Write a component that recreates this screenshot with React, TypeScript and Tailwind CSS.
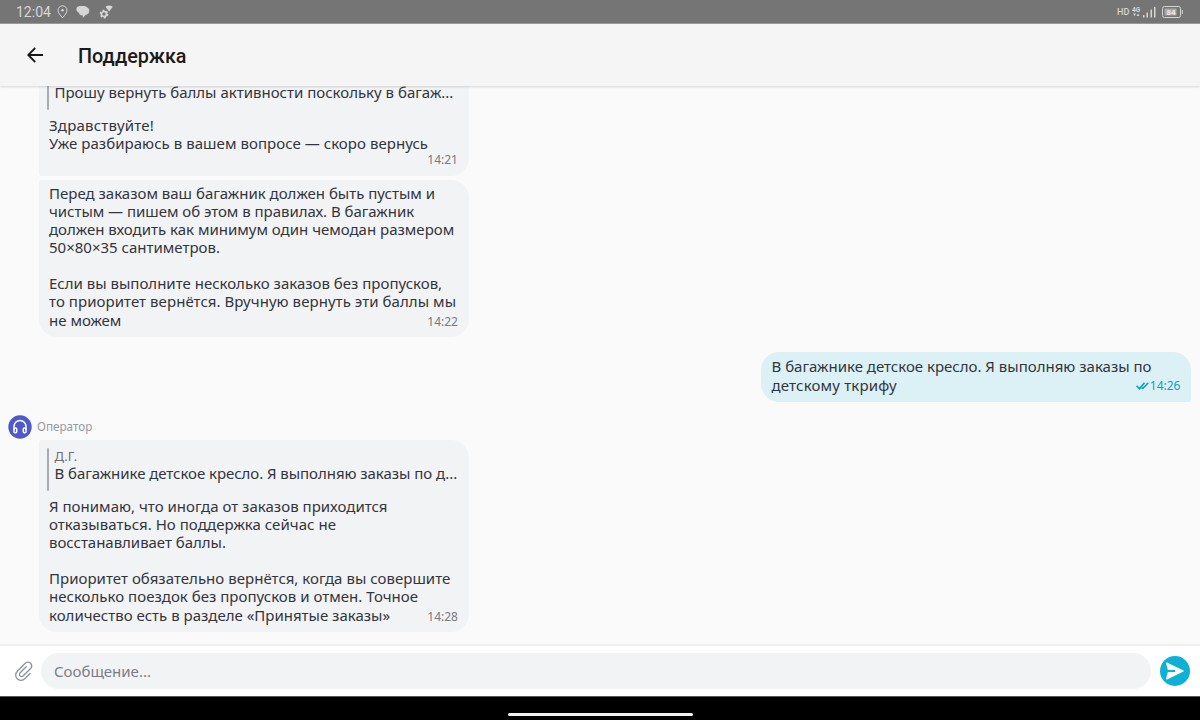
import * as React from "react";
import clsx from "clsx";

type Line = {
  text: string;
  tracking?: string;
};

type Quote = {
  author?: string;
  line: Line;
};

const waitLines: Line[] = [
  { text: "Здравствуйте!", tracking: "tracking-[0.2px]" },
  { text: "Уже разбираюсь в вашем вопросе — скоро вернусь", tracking: "tracking-[0.05px]" }
];

const rulesLines: Line[] = [
  { text: "Перед заказом ваш багажник должен быть пустым и" },
  { text: "чистым — пишем об этом в правилах. В багажник", tracking: "tracking-[-0.03px]" },
  { text: "должен входить как минимум один чемодан размером" },
  { text: "50×80×35 сантиметров." },
  { text: "" },
  { text: "Если вы выполните несколько заказов без пропусков," },
  { text: "то приоритет вернётся. Вручную вернуть эти баллы мы", tracking: "tracking-[0.06px]" },
  { text: "не можем" }
];

const ownLines: Line[] = [
  { text: "В багажнике детское кресло. Я выполняю заказы по" },
  { text: "детскому ткрифу", tracking: "tracking-[0.18px]" }
];

const answerLines: Line[] = [
  { text: "Я понимаю, что иногда от заказов приходится", tracking: "tracking-[0.02px]" },
  { text: "отказываться. Но поддержка сейчас не", tracking: "tracking-[0.04px]" },
  { text: "восстанавливает баллы.", tracking: "tracking-[-0.03px]" },
  { text: "" },
  { text: "Приоритет обязательно вернётся, когда вы совершите", tracking: "tracking-[0.03px]" },
  { text: "несколько поездок без пропусков и отмен. Точное", tracking: "tracking-[0.02px]" },
  { text: "количество есть в разделе «Принятые заказы»" }
];

function StatusBar() {
  return (
    <div className="flex h-6 shrink-0 items-center border-b border-[#9b9b9b] bg-[#757575] pl-4 pr-4 text-[#d6d6d6]">
      <span className="w-[35px] pt-px font-['Roboto',sans-serif] text-[14px] leading-6">12:04</span>
      <svg className="ml-[6px] h-[14px] w-[11px]" viewBox="0 0 11 14" fill="none" stroke="currentColor">
        <path d="M5.500 12.800C3.200 10.200 1 7.700 1 5.300a4.500 4.500 0 0 1 9 0c0 2.400-2.200 4.900-4.500 7.500Z" />
        <circle cx="5.500" cy="5.300" r="1.300" fill="currentColor" stroke="none" />
      </svg>
      <svg className="ml-2 h-[14px] w-[14px]" viewBox="0 0 14 14" fill="currentColor">
        <path d="M4.500 1h3c1.700 0 2.900.5 3.700 1.500 1.300.6 2.100 1.800 2.100 3.300 0 2.200-1.600 4-4 4.400L6.800 13v-2.500C4.500 10.400 3 9.300 2.700 7.400 1.200 6.800.4 5.500.4 4.200.4 2.200 2.200 1 4.500 1Z" />
      </svg>
      <svg className="ml-[9px] h-[14px] w-[15px]" viewBox="0 0 15 14">
        <circle cx="5" cy="9" r="2.500" fill="none" stroke="currentColor" strokeWidth="1.700" />
        <circle cx="5" cy="9" r="3.700" fill="none" stroke="currentColor" strokeWidth="1.400" strokeDasharray="2 1.874" />
        <path d="M6.400 1.800c2.300-1.600 5.100-1.600 7.400 0L10.200 6.600Z" fill="currentColor" />
      </svg>
      <div className="ml-auto flex items-center">
        <span className="w-[13px] pt-px font-['Roboto',sans-serif] text-[9px] font-medium leading-none">HD</span>
        <svg className="ml-[2px] h-[14px] w-[25px]" viewBox="0 0 25 14" fill="currentColor">
          <text x="0" y="6.500" fontSize="6.500" fontWeight="700" fontFamily="Roboto, sans-serif">
            4G
          </text>
          <path d="M1 8.500h3L2.500 11ZM4.500 11h3L6 8.500ZM11 10h1.500v2.500H11ZM14.500 7.500H16v5h-1.500ZM18.500 4.500H20v8h-1.500ZM22 2h1.500v10.500H22Z" />
        </svg>
        <svg className="ml-[5px] mr-px h-[12px] w-[21px]" viewBox="0 0 21 12">
          <rect x=".5" y=".5" width="18" height="11" rx="2" fill="none" stroke="currentColor" />
          <rect x="2.500" y="2.500" width="12" height="7" fill="#a9a9a9" />
          <path d="M20.300 4v4" stroke="currentColor" />
          <text x="4.500" y="8.800" fontSize="8" fontWeight="700" fontFamily="Roboto, sans-serif" fill="#e8e8e8">
            84
          </text>
        </svg>
      </div>
    </div>
  );
}

function Header() {
  return (
    <header className="z-10 flex h-[62px] shrink-0 items-center bg-[#f5f5f5] pl-[27px] shadow-[0_1px_2px_rgba(0,0,0,0.15)]">
      <svg className="h-4 w-4" viewBox="0 0 16 16" fill="none" stroke="#171717" strokeWidth="1.800">
        <path d="M8.200 1 1.200 8l7 7M1.500 8H16" />
      </svg>
      <h1 className="ml-[35px] pt-[3px] font-['Roboto',sans-serif] text-[19.800px] font-medium leading-6 text-[#1b1b1b]">
        Поддержка
      </h1>
    </header>
  );
}

function Lines({ lines }: { lines: Line[] }) {
  return (
    <>
      {lines.map((line, index) => (
        <p key={index} className={clsx("h-[18px] whitespace-nowrap leading-[18px]", line.tracking)}>
          {line.text}
        </p>
      ))}
    </>
  );
}

function QuoteBlock({ author, line }: Quote) {
  return (
    <div className="-ml-[2px] mb-[6px] flex h-[43px]">
      <div className="w-[2px] shrink-0 rounded-full bg-[#a9abb0]" />
      <div className="ml-[5.500px]">
        <p className="h-4 text-[13px] leading-[17px] text-[#6d6f78]">{author}</p>
        <p className={clsx("whitespace-nowrap leading-[18px]", line.tracking)}>{line.text}</p>
      </div>
    </div>
  );
}

function Time({ value }: { value: string }) {
  return <span className="text-[12px] leading-4 text-[#777a83]">{value}</span>;
}

function Bubble({
  lines,
  time,
  quote,
  own = false,
  timeBelow = false,
  className
}: {
  lines: Line[];
  time: string;
  quote?: Quote;
  own?: boolean;
  timeBelow?: boolean;
  className?: string;
}) {
  const body = timeBelow ? lines : lines.slice(0, -1);
  const last = lines[lines.length - 1];

  return (
    <article
      className={clsx(
        "w-[430px] shrink-0 font-['Noto_Sans',sans-serif] text-[15px] text-[#33353d]",
        own ? "bg-[#dcf1f6] pl-[11px] pr-[10px]" : "bg-[#f2f3f5] pl-[10.500px] pr-[10.500px]",
        className
      )}
    >
      {quote ? <QuoteBlock {...quote} /> : null}
      <Lines lines={body} />
      {timeBelow ? (
        <div className="flex h-4 items-end justify-end pt-px">
          <Time value={time} />
        </div>
      ) : (
        <div className="flex h-5 items-center justify-between">
          <p className={clsx("whitespace-nowrap leading-5", last.tracking)}>{last.text}</p>
          {own ? (
            <span className="mt-[2px] flex items-center text-[12px] leading-4 text-[#0a9fc4]">
              <svg className="mr-px h-2 w-[13px]" viewBox="0 0 13 8" fill="none" stroke="currentColor" strokeWidth="1.600">
                <path d="m.6 3.800 2.900 3L8.500.8M6.600 6.800 12.300.8M6.800 6.900 5.800 5.800" />
              </svg>
              {time}
            </span>
          ) : (
            <span className="mt-[3px] flex">
              <Time value={time} />
            </span>
          )}
        </div>
      )}
    </article>
  );
}

function OperatorLabel() {
  return (
    <div className="mb-px mt-[13px] flex h-6 shrink-0 items-center pl-[7.500px]">
      <svg className="h-6 w-6" viewBox="0 0 24 24" fill="none" stroke="#fff" strokeWidth="1.500">
        <circle cx="12" cy="12" r="11.700" fill="#4f59cd" stroke="none" />
        <path d="M6 15v-3.500a6 6 0 0 1 12 0V15" />
        <rect x="6" y="13" width="2.700" height="4.700" rx="1.100" />
        <rect x="15.300" y="13" width="2.700" height="4.700" rx="1.100" />
      </svg>
      <span className="ml-[5.500px] pb-[2px] font-['Noto_Sans',sans-serif] text-[11.700px] leading-4 text-[#9699a2]">
        Оператор
      </span>
    </div>
  );
}

function Composer() {
  return (
    <div className="flex h-[52px] shrink-0 items-center border-t-2 border-[#efefef] bg-white pl-[14px] pr-[11px]">
      <svg className="h-[22px] w-5" viewBox="0 0 20 22" fill="none" stroke="#8f929b" strokeWidth="1.300" strokeLinecap="round">
        <path d="m16 13.500-5 5c-2.300 2.300-5.700 2.400-7.800.3s-2-5.500.3-7.800L11 3.500c1.700-1.700 4-1.700 5.500-.2s1.500 3.800-.2 5.500l-7 7c-1 1-2.300 1-3.200.1s-.9-2.200.1-3.200l6-6" />
      </svg>
      <div className="ml-[7px] flex h-9 grow items-center rounded-full bg-[#f2f3f5] pl-[13px] font-['Noto_Sans',sans-serif] text-[15px] text-[#7b7d86]">
        Сообщение...
      </div>
      <div className="-mr-[0.500px] ml-[8.500px] flex h-[30px] w-[30px] items-center justify-center rounded-full bg-[#0fb0d5]">
        <svg className="h-[18px] w-[19px]" viewBox="0 0 19 18" fill="#fff">
          <path d="M1 1.200c0-.6.400-.8 1-.6L18.500 8.500c.5.300.5.700 0 1L2 17.400c-.6.200-1 0-1-.6l1.900-6.800H10v-2H2.900Z" />
        </svg>
      </div>
    </div>
  );
}

export default function App() {
  return (
    <div className="flex h-[720px] w-[1200px] flex-col overflow-hidden bg-[#fafafa]">
      <StatusBar />
      <Header />
      <main className="flex min-h-0 grow flex-col justify-end overflow-hidden pb-[12px]">
        <Bubble
          className="ml-[38.500px] rounded-bl-[3px] rounded-br-[18px] rounded-tr-[18px] pb-2 pt-2"
          quote={{ line: { text: "Прошу вернуть баллы активности поскольку в багаж..." } }}
          lines={waitLines}
          time="14:21"
          timeBelow
        />
        <Bubble
          className="ml-[38.500px] mt-1 rounded-[18px] rounded-tl-[3px] pb-[7px] pt-1"
          lines={rulesLines}
          time="14:22"
        />
        <Bubble
          className="ml-[760.500px] mt-[15px] rounded-[18px] rounded-br-[2px] pb-[7px] pt-[5px]"
          lines={ownLines}
          time="14:26"
          own
        />
        <OperatorLabel />
        <Bubble
          className="ml-[38.500px] rounded-[18px] rounded-tl-[3px] pb-[7px] pt-2"
          quote={{
            author: "Д.Г.",
            line: { text: "В багажнике детское кресло. Я выполняю заказы по д...", tracking: "tracking-[-0.05px]" }
          }}
          lines={answerLines}
          time="14:28"
        />
      </main>
      <Composer />
      <footer className="flex h-6 shrink-0 justify-center border-t border-[#555] bg-black pt-4">
        <div className="h-[3px] w-[185px] rounded-full bg-[#f0f1f2]" />
      </footer>
    </div>
  );
}
